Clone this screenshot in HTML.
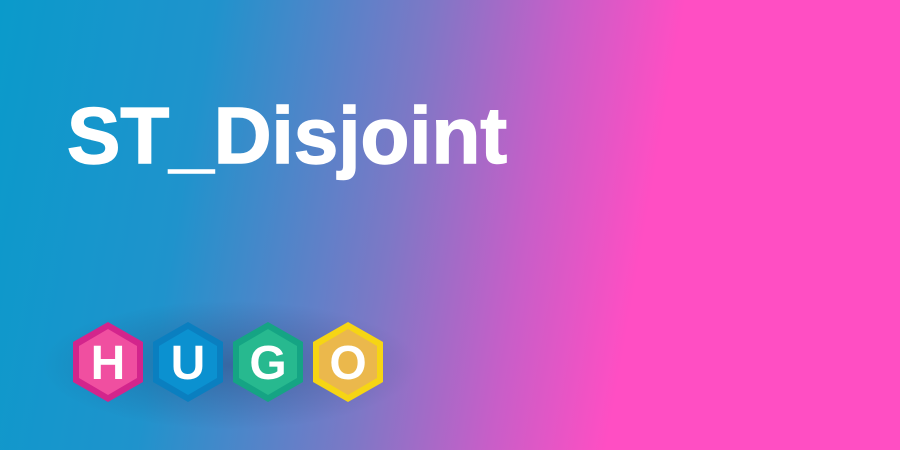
<!DOCTYPE html>
<html><head><style>
body{margin:0;width:900px;height:450px;overflow:hidden;font-family:"Liberation Sans",sans-serif}
.bg{position:absolute;inset:0;background:linear-gradient(100deg,#0a9acb 0%,#1f93cc 22%,#7d78c6 44%,#c85ec8 58%,#ff4ec3 70%,#ff4ec3 100%)}
.sh{position:absolute;left:40px;top:300px;width:380px;height:130px;background:radial-gradient(ellipse at center,rgba(40,40,90,.35),rgba(40,40,90,0) 70%)}
h1{position:absolute;left:67px;top:96px;margin:0;color:#fff;font-size:80px;line-height:80px;font-weight:bold;-webkit-text-stroke:1.5px #fff}
svg{position:absolute;left:0;top:0}
</style></head><body>
<div class="bg"></div><div class="sh"></div>
<h1>ST_Disjoint</h1>
<svg width="900" height="450">
<g font-family="Liberation Sans,sans-serif" font-weight="bold" font-size="48" fill="#fff" text-anchor="middle">
<g transform="translate(108,362)"><polygon points="0,-40 35,-20 35,20 0,40 -35,20 -35,-20" fill="#d3258c"/><polygon points="0,-33 29,-16 29,16 0,33 -29,16 -29,-16" fill="#f04fa0"/><text y="17">H</text></g>
<g transform="translate(188,362)"><polygon points="0,-40 35,-20 35,20 0,40 -35,20 -35,-20" fill="#0a7fc0"/><polygon points="0,-33 29,-16 29,16 0,33 -29,16 -29,-16" fill="#0b91d0"/><text y="17">U</text></g>
<g transform="translate(268,362)"><polygon points="0,-40 35,-20 35,20 0,40 -35,20 -35,-20" fill="#15a484"/><polygon points="0,-33 29,-16 29,16 0,33 -29,16 -29,-16" fill="#27b98f"/><text y="17">G</text></g>
<g transform="translate(348,362)"><polygon points="0,-40 35,-20 35,20 0,40 -35,20 -35,-20" fill="#f6d514"/><polygon points="0,-33 29,-16 29,16 0,33 -29,16 -29,-16" fill="#ebb84c"/><text y="17">O</text></g>
</g></svg>
</body></html>
